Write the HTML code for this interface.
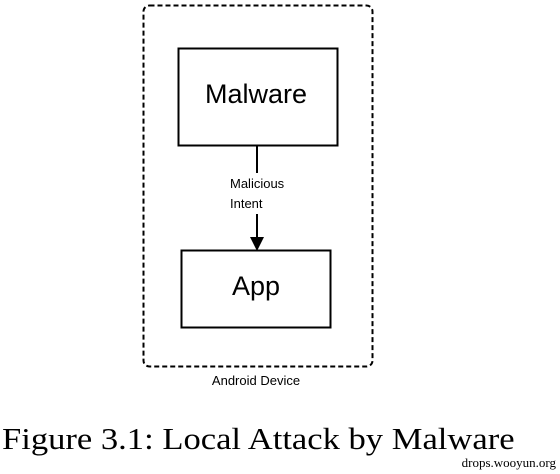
<!DOCTYPE html>
<html><head><style>
body{margin:0;width:560px;height:474px;background:#fff;overflow:hidden;position:relative}
.s{font-family:"Liberation Sans",sans-serif;position:absolute;color:#000}
</style></head><body>
<svg width="560" height="474" style="position:absolute;left:0;top:0">
<rect x="143.5" y="5.5" width="229" height="361" rx="6" fill="none" stroke="#000" stroke-width="2" stroke-dasharray="5,3"/>
<rect x="178.5" y="48.5" width="159" height="97" fill="none" stroke="#000" stroke-width="2"/>
<rect x="181.5" y="250.5" width="149" height="77" fill="none" stroke="#000" stroke-width="2"/>
<line x1="257" y1="145" x2="257" y2="173" stroke="#000" stroke-width="2"/>
<line x1="257" y1="214" x2="257" y2="240" stroke="#000" stroke-width="2"/>
<polygon points="250,237 264,237 257,251" fill="#000"/>
</svg>
<div class="s" style="left:176px;top:79px;width:160px;text-align:center;font-size:27px">Malware</div>
<div class="s" style="left:181px;top:271px;width:150px;text-align:center;font-size:27px">App</div>
<div class="s" style="left:230px;top:176px;font-size:13px">Malicious</div>
<div class="s" style="left:230px;top:196px;font-size:13px">Intent</div>
<div class="s" style="left:141px;top:373px;width:230px;text-align:center;font-size:13px">Android Device</div>
<div style="position:absolute;left:2px;top:421px;font-family:'Liberation Serif',serif;font-size:31px;white-space:nowrap;transform:scaleX(1.115);transform-origin:0 0">Figure 3.1: Local Attack by Malware</div>
<div style="position:absolute;right:4px;top:455px;font-family:'Liberation Serif',serif;font-size:13px">drops.wooyun.org</div>
</body></html>
